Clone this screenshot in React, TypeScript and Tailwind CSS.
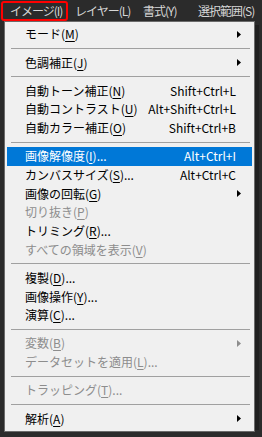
type Item = {
  label: string;
  key?: string;
  tail?: string;
  shortcut?: string;
  sub?: boolean;
  disabled?: boolean;
  active?: boolean;
};

type Entry = Item | 'sep';

const entries: Entry[] = [
  { label: 'モード', key: 'M', sub: true },
  'sep',
  { label: '色調補正', key: 'J', sub: true },
  'sep',
  { label: '自動トーン補正', key: 'N', shortcut: 'Shift+Ctrl+L' },
  { label: '自動コントラスト', key: 'U', shortcut: 'Alt+Shift+Ctrl+L' },
  { label: '自動カラー補正', key: 'O', shortcut: 'Shift+Ctrl+B' },
  'sep',
  { label: '画像解像度', key: 'I', tail: '...', shortcut: 'Alt+Ctrl+I', active: true },
  { label: 'カンバスサイズ', key: 'S', tail: '...', shortcut: 'Alt+Ctrl+C' },
  { label: '画像の回転', key: 'G', sub: true },
  { label: '切り抜き', key: 'P', disabled: true },
  { label: 'トリミング', key: 'R', tail: '...' },
  { label: 'すべての領域を表示', key: 'V', disabled: true },
  'sep',
  { label: '複製', key: 'D', tail: '...' },
  { label: '画像操作', key: 'Y', tail: '...' },
  { label: '演算', key: 'C', tail: '...' },
  'sep',
  { label: '変数', key: 'B', sub: true, disabled: true },
  { label: 'データセットを適用', key: 'L', tail: '...', disabled: true },
  'sep',
  { label: 'トラッピング', key: 'T', tail: '...', disabled: true },
  'sep',
  { label: '解析', key: 'A', sub: true },
];

function Arrow({ color }: { color: string }) {
  return (
    <svg width="4" height="7" viewBox="0 0 4 7" className="shrink-0">
      <path d="M0 0L4 3.5L0 7Z" fill={color} />
    </svg>
  );
}

function MenuRow({ item }: { item: Item }) {
  const text = item.active
    ? 'text-white'
    : item.disabled
      ? 'text-[#8d8d8d]'
      : 'text-black';
  return (
    <div
      className={`mx-[2px] flex h-[18.7px] items-center pl-[18px] pr-[11px] ${
        item.active ? 'bg-[#0078d7]' : ''
      } ${text}`}
    >
      <span className="flex-1 whitespace-nowrap">
        {item.label}(<u className="underline-offset-2">{item.key}</u>){item.tail}
      </span>
      {item.shortcut && <span className="whitespace-nowrap pr-[5px]">{item.shortcut}</span>}
      {item.sub && <Arrow color={item.disabled ? '#8d8d8d' : '#000'} />}
    </div>
  );
}

export default function App() {
  const font = { fontFamily: '"Noto Sans CJK JP", "Noto Sans", sans-serif' };
  return (
    <div
      className="h-[437px] w-[262px] overflow-hidden bg-[#2b2b2b] text-[12px] leading-none"
      style={font}
    >
      <div className="flex h-[21px] items-center whitespace-nowrap tracking-[-1px] text-[#d6d6d6]">
        <div className="ml-[1px] flex h-[20px] w-[67px] shrink-0 items-center overflow-hidden rounded-[3px] border-2 border-[#ff0000] pl-[7px]">
          イメージ(I)
        </div>
        <div className="ml-[7px] w-[68px] shrink-0">レイヤー(L)</div>
        <div className="w-[55px] shrink-0">書式(Y)</div>
        <div className="shrink-0">選択範囲(S)</div>
      </div>
      <div className="flex">
        <div className="ml-[4px] w-[251px] border border-[#6b6b6b] bg-[#f0f0f0] py-[3px]">
          {entries.map((e, i) =>
            e === 'sep' ? (
              <div key={i} className="mx-[4px] flex h-[9.5px] items-center pl-[2px]">
                <div className="h-px w-full bg-[#a0a0a0]" />
              </div>
            ) : (
              <MenuRow key={i} item={e} />
            ),
          )}
        </div>
        <div className="mt-[4px] h-[405px] w-[4px] bg-[#202020]" />
      </div>
    </div>
  );
}
